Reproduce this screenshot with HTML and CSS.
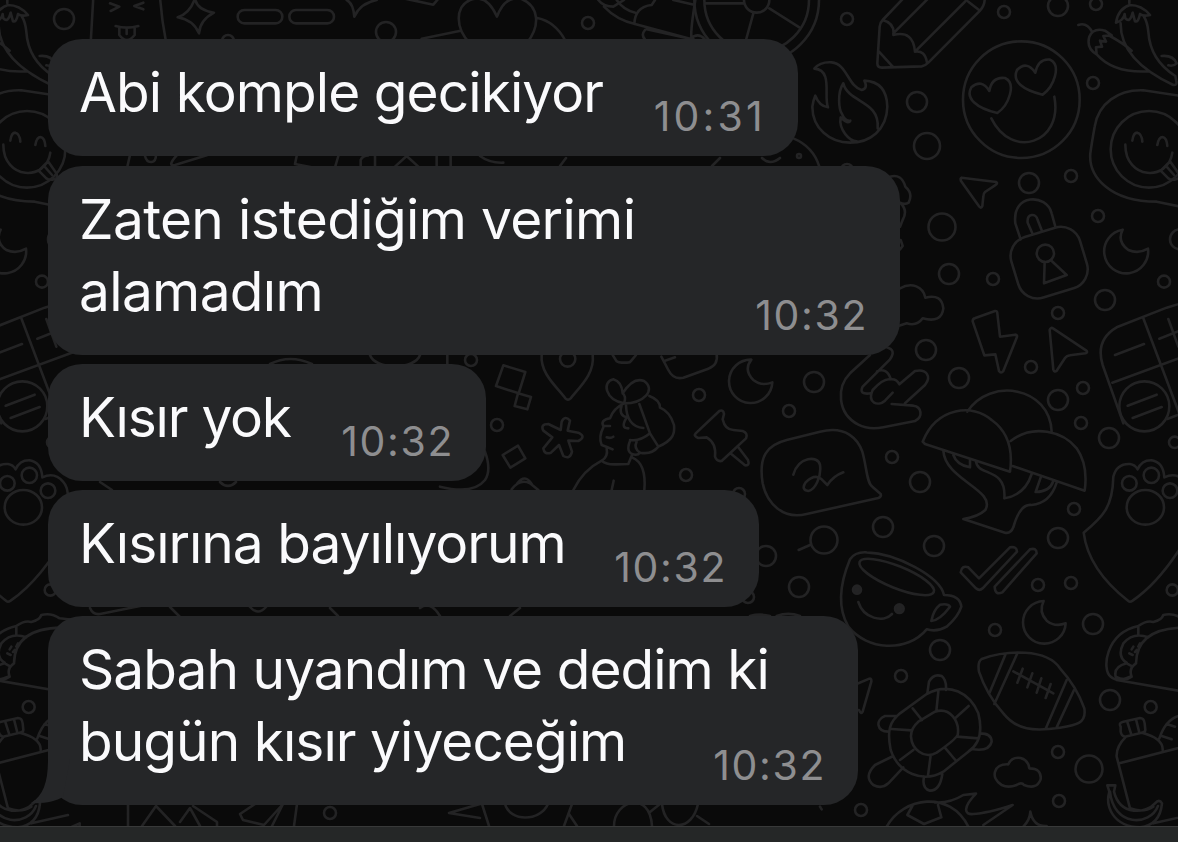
FILE: index.html
```html
<!DOCTYPE html>
<html lang="tr">
<head>
    <meta charset="UTF-8">
    <meta name="viewport" content="width=device-width, initial-scale=1.0">
    <title>Sohbet</title>
    <link rel="stylesheet" href="styles.css">
</head>
<body>
<div class="chat">
    <svg class="wallpaper" viewBox="0 0 1178 842" aria-hidden="true">
        <!-- doodles that repeat at both edges of the wallpaper -->
        <g id="edge">
            <g transform="translate(780 0) scale(.33333)">
                <!-- chilies -->
                <path d="M895 75Q920 66 936 95M928 110Q940 82 975 92L995 106L970 108L978 125L960 122L966 140L948 142L950 163Q918 145 928 110M990 108Q1030 130 1055 152M950 163Q1000 220 1106 214M1048 10V-10M1008 68Q1015 25 1050 15Q1085 15 1110 45Q1090 50 1080 42Q1075 68 1065 64L1058 38Q1050 70 1036 55L1034 42Q1030 62 1008 68M1022 70Q1020 180 1180 255Q1192 256 1189 243L1186 228Q1110 180 1105 95Q1102 65 1092 50M1145 168Q1180 165 1190 190Q1180 200 1165 196"/>
                <!-- sticker with tongue face -->
                <path d="M1300 640L1130 605C990 605 925 530 931 460Q935 430 944 380C955 310 1015 268 1090 271L1320 305"/>
                <circle cx="1107" cy="448" r="115"/>
                <path d="M1036 434C1036 540 1165 545 1177 458M1057 422Q1060 398 1072 398Q1085 400 1087 425M1132 435Q1136 411 1148 411Q1160 413 1162 438M1142 512L1170 484L1192 515Q1205 535 1188 538Q1175 542 1165 535ZM1160 500L1182 525"/>
            </g>
            <g transform="translate(880 160) scale(.33333)">
                <!-- moon -->
                <path d="M728 209A66 66 0 1 0 804 266Q775 283 745 270Q710 245 728 209Z"/>
                <circle cx="900" cy="238" r="30"/><circle cx="852" cy="365" r="18"/>
                <!-- calculator -->
                <path d="M730 790L668 615Q645 540 710 502L860 443Q920 425 1000 400M790 475L905 780M697 668L1060 535M705 585L792 552M865 477L895 560M838 536L910 508"/>
                <circle cx="793" cy="739" r="75"/>
                <path d="M743 737L830 704M758 774L845 741M862 777L1000 725"/>
            </g>
            <g transform="translate(740 340) scale(.33333)">
                <!-- paw -->
                <path d="M1166 784Q1045 690 1031 578C1090 530 1118 500 1120 410Q1130 370 1170 372Q1185 374 1193 388Q1205 360 1235 361Q1270 367 1273 412Q1310 395 1335 425Q1350 440 1350 475L1360 560Q1270 720 1178 782Q1170 787 1166 784Z"/>
                <ellipse cx="1216" cy="502" rx="56" ry="52"/><circle cx="1168" cy="430" r="22"/><circle cx="1234" cy="406" r="23"/><circle cx="1290" cy="452" r="22"/>
                <circle cx="1304" cy="307" r="17"/>
            </g>
            <g transform="translate(740 500) scale(.33333)">
                <circle cx="1297" cy="270" r="17"/>
                <!-- taco -->
                <path d="M1112 530C1085 510 1095 400 1195 378Q1220 360 1240 366Q1265 360 1270 345Q1300 338 1325 355L1370 360M1195 378V405M1188 490Q1190 385 1330 383M1188 490Q1165 505 1175 530Q1155 545 1127 530Q1120 500 1160 490L1178 500M1112 530Q1130 548 1170 530M1160 488Q1130 470 1150 430Q1180 395 1225 412M1180 440L1175 448M1200 430L1195 440M1190 450L1185 456M1168 460L1178 465M1130 540L1430 592"/>
            </g>
            <g transform="translate(820 630) scale(.33333)">
                <circle cx="992" cy="231" r="18"/>
                <!-- bottle -->
                <path d="M902 290Q895 278 910 275L960 264Q972 264 974 280L976 300Q975 308 965 308L915 320Q904 318 902 305ZM922 276L934 314M948 268L958 308M918 320Q888 350 890 380L930 535M966 308Q1030 325 1028 360M898 400L1110 345M1018 325Q1040 260 1090 255M1040 282L1065 290M1025 318L1055 328"/>
                <!-- banana -->
                <path d="M862 466H886L882 485C900 560 980 550 1005 520Q1018 505 1026 520Q1020 585 960 592C880 590 855 530 868 485ZM870 485C880 590 990 590 1014 528M930 535Q970 550 1000 530M1000 580L1110 555M1100 600L1145 580V600"/>
            </g>
        </g>
        <use href="#edge" x="-1122"/>

        <!-- small circles -->
        <g>
            <circle cx="847" cy="19" r="6"/><circle cx="1004" cy="12" r="6"/><circle cx="1058" cy="6" r="10"/><circle cx="1096" cy="4" r="6"/>
            <circle cx="917" cy="102" r="10"/><circle cx="927" cy="146" r="13"/><circle cx="1093" cy="83" r="6"/>
            <circle cx="1029" cy="183" r="10"/><circle cx="1071" cy="176" r="6"/><circle cx="1098" cy="216" r="6"/>
            <circle cx="942" cy="227" r="13.500"/><circle cx="949" cy="274" r="10"/><circle cx="993" cy="279" r="6"/>
            <circle cx="1105" cy="300" r="10"/><circle cx="1058" cy="313" r="6"/><circle cx="926" cy="350" r="10"/>
            <circle cx="959" cy="378" r="10"/><circle cx="1031" cy="367" r="6"/><circle cx="1083" cy="388" r="6"/>
            <circle cx="1058" cy="400" r="10"/><circle cx="1081" cy="423" r="6"/><circle cx="1109" cy="438" r="10"/>
            <circle cx="814" cy="382" r="10"/><circle cx="789" cy="411" r="6"/><circle cx="892" cy="457" r="6"/><circle cx="920" cy="482" r="10"/>
            <circle cx="1074" cy="509" r="6"/><circle cx="883" cy="527" r="10"/><circle cx="934" cy="546" r="10"/><circle cx="1058" cy="538" r="10"/>
            <circle cx="824" cy="540" r="13.500"/><circle cx="766" cy="556" r="10"/><circle cx="799" cy="587" r="10"/><circle cx="748" cy="597" r="6"/>
            <circle cx="1038" cy="585" r="6"/><circle cx="1071" cy="583" r="6"/><circle cx="995" cy="630" r="6"/><circle cx="1093" cy="624" r="10"/>
            <circle cx="940" cy="650" r="10"/><circle cx="901" cy="676" r="6"/><circle cx="1110" cy="700" r="10"/>
            <circle cx="1058" cy="752" r="6"/><circle cx="1089" cy="769" r="13.500"/><circle cx="1059" cy="801" r="6"/><circle cx="861" cy="810" r="6"/>
            <circle cx="471" cy="360" r="6"/><circle cx="497" cy="425" r="6"/><circle cx="699" cy="395" r="6"/><circle cx="686" cy="475" r="6"/><circle cx="739" cy="494" r="6"/>
            <circle cx="64" cy="19" r="10"/><circle cx="386" cy="32" r="10"/><circle cx="588" cy="23" r="6"/><circle cx="228" cy="41" r="6"/>
            <circle cx="330" cy="813" r="6"/><circle cx="799" cy="156" r="2"/><circle cx="847" cy="170" r="6"/>
        </g>

        <g transform="scale(.33333)">
            <path d="M280 -10L272 130M480 -10Q485 60 498 125M330 10L358 20L332 33M430 8L403 18L430 28M347 78Q380 88 415 78M358 82V105Q380 135 404 105V82M380 84V102"/>
            <path d="M585 -5Q590 30 642 38Q600 60 597 100Q580 60 533 52Q570 40 585 -5Z"/>
            <rect x="713" y="30" width="134" height="40" rx="20"/><rect x="868" y="30" width="134" height="40" rx="20"/>
            <path d="M1040 0Q1060 10 1063 50Q1080 10 1130 0M1210 -5L1300 14L1312 0M1265 116L1382 92"/>
            <path d="M1410 130C1365 85 1365 20 1410 0Q1460 -20 1491 50Q1515 -15 1565 -3C1620 20 1620 80 1580 130M1612 54Q1665 65 1695 120"/>
            <path d="M390 465L382 500M435 468Q440 488 455 486Q468 484 468 465M530 466Q500 500 525 495L620 466M890 468L885 492L935 502M1015 468L1005 502M1082 500V480Q1088 466 1105 466M1125 500V468M1185 500L1220 468L1255 500M1310 500V468M1352 500V468M1440 468Q1470 490 1510 488"/>
        </g>

        <g transform="translate(400 0) scale(.33333)">
            <path d="M595 0Q610 20 640 20L672 0M612 20Q650 60 705 72L870 116M650 0Q670 30 706 38M703 72Q705 20 755 15L765 0M820 0L882 14M886 0Q865 130 880 116M735 90Q722 105 735 118M740 88L870 116Q895 95 915 118"/>
            <circle cx="1070" cy="0" r="187"/><circle cx="1070" cy="0" r="157"/><circle cx="1070" cy="0" r="38"/>
            <path d="M915 10H1032M1108 25L1198 82M1060 40L1038 120"/>
        </g>

        <g transform="translate(780 0) scale(.33333)">
            <!-- pencil -->
            <path d="M370 -5L308 60Q300 68 299 80L292 190Q292 203 305 203L425 199Q435 198 445 188L600 32Q615 15 614 -5M308 60Q345 70 340 105Q400 90 405 155Q435 150 441 188M340 100L445 -5M405 155L560 0M565 5L600 32M297 155L338 200"/>
            <!-- flame -->
            <path d="M103 206Q120 185 155 187C200 190 205 260 245 270Q265 265 253 242Q320 245 322 320C320 390 270 428 210 428C150 428 97 385 97 320Q100 300 106 287Q118 318 144 322C130 290 160 210 103 206ZM190 250C170 280 178 330 185 340Q195 365 211 362Q205 375 182 352C175 390 210 424 230 424M190 250C205 310 300 300 293 385"/>
            <path d="M40 415Q100 440 118 500"/>
            <!-- heart eyes -->
            <circle cx="724" cy="299" r="175"/>
            <path d="M652 339C590 325 555 295 574 262Q605 235 628 273Q635 230 675 234C710 250 687 315 652 339ZM788 284C730 270 695 245 711 210Q740 180 766 218Q775 175 810 179C845 195 822 260 788 284ZM634 355C695 480 850 430 823 290"/>
        </g>

        <g transform="translate(880 160) scale(.33333)">
            <path d="M30 50Q65 40 76 80Q100 100 86 128Q75 135 60 128Q85 150 68 180L60 200M62 240L68 258L60 268M60 385C95 365 130 380 136 413Q185 400 190 445Q185 490 128 475Q110 500 80 490L55 498"/>
            <path d="M245 53L349 66Q355 70 345 76L315 96Q310 100 310 110L307 138Q303 147 297 139L243 63Q240 55 245 53Z"/>
            <!-- padlock -->
            <rect x="400" y="213" width="215" height="190" rx="60" transform="rotate(-17 507 308)"/>
            <path d="M422 238L406 190C395 100 500 100 515 160L526 200M457 220L443 188C440 160 468 158 473 180L486 213M494 306L492 370L560 345L512 300"/>
            <circle cx="496" cy="280" r="26"/>
            <!-- bolt and arrow -->
            <path d="M284 475L345 453Q352 452 352 460L360 530L405 524Q414 525 410 533L370 633Q363 642 357 633L346 583L313 586L278 484Q278 477 284 475ZM519 505L618 571Q625 577 617 580L570 586Q560 587 555 594L530 632Q523 638 520 629L509 510Q512 501 519 505Z"/>
        </g>

        <g transform="translate(440 340) scale(.33333)">
            <path d="M22 45V75M190 76L256 96L236 160L168 138ZM234 160L273 171L262 208L224 198ZM188 345L234 317L256 355L211 383ZM215 448Q240 415 270 430L295 450M232 430Q255 400 275 432M135 335Q155 390 135 420Q100 465 0 440"/>
            <!-- pin -->
            <path d="M305 45C300 100 350 140 376 175Q384 183 392 175C420 140 465 100 458 45M518 45L530 64Q535 68 545 68H562Q570 68 574 62L588 45M664 50L685 90Q700 120 730 113L805 86Q835 75 830 42M675 62L705 52"/><circle cx="383" cy="57" r="23"/>
            <path d="M362 270L365 245Q375 225 390 242L383 272L415 278Q440 290 415 303L385 302L396 335Q390 360 370 348L357 315L333 338Q312 345 310 325L337 292L310 272Q300 252 325 252Z"/>
            <!-- woman -->
            <path d="M552 190C495 180 485 125 520 118Q545 125 548 160Q580 110 612 123C650 150 610 190 552 190M548 160Q560 170 552 190M552 190Q520 205 510 235Q480 240 490 258L510 258M490 262Q475 290 485 315Q500 320 518 328M500 326Q505 350 485 362Q500 375 530 373L565 372L576 345M500 292Q512 296 520 290M545 196Q535 225 560 232Q540 265 565 265M558 195Q560 260 610 264M598 192L630 280Q600 305 570 300M570 303Q555 340 585 344Q595 345 600 338Q580 325 590 305M600 338Q635 345 655 320L630 280M655 320C700 300 705 280 702 255Q690 215 660 203Q660 180 628 168M485 362Q430 390 400 450M576 352Q620 370 613 450M521 422L515 450"/>
            <path d="M934 59A65 65 0 1 0 997 127Q965 140 940 120Q910 90 934 59Z"/>
            <!-- pushpin -->
            <path d="M767 280L838 213Q850 208 852 222L848 238Q855 270 880 270L908 273Q925 280 918 295L845 363Q830 365 825 350Q830 310 800 292L775 294Q760 288 767 280ZM875 343L915 376Q930 378 924 360L895 322"/>
        </g>

        <g transform="translate(740 340) scale(.33333)">
            <!-- hand -->
            <path d="M390 45L330 100C290 140 290 220 355 254Q385 270 430 262L525 243C550 230 545 200 520 197L455 192M440 22Q470 30 450 58L368 140Q355 165 392 160M411 94Q440 82 452 116M450 118Q430 115 398 150C380 190 415 200 435 182L458 158M450 118Q470 115 478 133L525 93C560 85 575 110 555 135L495 190"/>
            <!-- note bubble -->
            <path d="M140 300L240 275C320 255 355 300 367 335C380 380 380 430 397 440L422 462Q425 470 415 474L200 522C130 540 80 490 68 430C55 350 80 315 140 300ZM160 404C175 350 235 345 240 375C245 410 225 450 205 453Q182 450 197 427Q225 400 245 418L262 435Q280 408 310 397"/>
            <!-- mushrooms -->
            <path d="M548 305C590 200 700 190 755 240Q825 290 810 395L555 312ZM682 215C750 110 930 140 935 275M812 303C880 250 970 275 1010 325Q1045 375 1034 452L818 378M610 332C615 420 770 450 736 510Q715 530 670 537L795 578Q812 582 820 562Q840 490 875 495Q930 490 950 428M640 345Q650 375 690 382V357M708 363C710 410 800 380 793 475Q855 465 875 402M903 410L887 456Q930 455 940 423"/>
        </g>

        <g transform="translate(740 500) scale(.33333)">
            <path d="M176 150L210 135M30 348Q60 340 90 348M110 348Q145 335 180 348"/>
            <!-- cup -->
            <path d="M330 178Q345 155 380 157C470 160 600 230 612 285Q660 285 664 320Q655 350 620 380Q590 397 560 388C500 460 380 450 325 380C290 320 300 250 330 178ZM574 363Q580 330 600 314Q625 310 630 320Q600 360 574 363ZM355 306C370 355 430 370 456 342"/>
            <ellipse cx="470" cy="231" rx="120" ry="33" transform="rotate(22 470 231)"/>
            <circle class="dot" cx="351" cy="269" r="12"/><circle class="dot" cx="478" cy="326" r="13"/>
            <!-- checks -->
            <path d="M662 217Q665 195 685 202L717 235L810 142Q830 138 831 155L728 265Q718 274 708 265ZM764 260L870 148Q890 142 890 160L787 277Q765 287 764 260Z"/>
            <path d="M911 303A64 64 0 1 0 977 370Q945 382 920 362Q895 335 911 303Z"/>
        </g>

        <g transform="translate(820 630) scale(.33333)">
            <path d="M110 162L148 146Q155 145 154 155L128 245Q123 254 117 240M0 530L5 538"/>
            <!-- football -->
            <path d="M485 87C560 60 680 55 720 115Q770 170 793 235C800 280 770 285 720 293C640 305 590 300 550 250Q500 195 477 125Q472 95 485 87ZM556 74L508 190M592 70L523 222M740 150L678 294M762 180L710 292M580 124L700 190M608 116L592 158M637 130L622 172M664 145L650 188M692 162L677 204"/>
            <!-- turtle -->
            <path d="M240 250L320 192C390 155 450 190 475 250C490 310 475 345 445 365L370 425C310 460 235 430 212 360C200 300 210 275 240 250ZM295 275L345 245C390 230 420 275 413 315Q405 330 350 368C310 390 275 355 273 320Q272 295 295 275ZM355 185L349 243M278 235L306 270M446 228L407 263M215 297L275 301M411 320L475 325M374 352L406 390M332 376L324 437M240 390L280 360M322 190L327 155Q340 130 365 138Q380 150 378 180M230 258L195 258C165 270 170 305 205 305M480 310Q515 310 515 335Q508 365 460 358M220 378L165 405Q130 440 160 465Q185 478 205 460L250 412M312 440Q305 475 330 482Q360 482 367 432"/>
            <path d="M545 465C510 445 520 400 565 403Q575 380 602 384Q625 390 628 415Q665 415 662 448Q650 480 612 465Q605 455 590 465Q565 475 545 465Z"/>
            <!-- burning ball -->
            <path d="M200 590C250 500 390 480 445 590M277 528L262 555L312 582L364 562L354 525M345 517Q390 520 430 495L468 491C430 530 430 555 460 552Q500 550 578 525L490 585M610 590Q630 570 631 545Q640 590 680 588"/>
        </g>

        <!-- pieces between and below the bubbles -->
        <path d="M90 608Q93 615 100 614L140 606M142 826L156 806L175 826M180 822L190 808L200 826M193 806L217 822V828M255 804L240 814L243 820L264 825L283 804M272 826L283 804M297 804L294 826M128 804V826M480 804L449 813L480 818M482 804L489 826M505 804C510 822 540 822 548 804M572 804L564 826M569 814L577 826M614 826C614 800 650 790 652 826M650 812L660 804M662 804C665 832 692 832 698 804M697 816L709 824M370 355C375 370 415 370 420 355M270 364Q290 354 312 364M170 607L180 617M250 607Q258 616 266 607M330 608L338 616M420 608Q430 600 440 616M520 608L510 616M100 482L112 490M220 482Q228 490 236 482M566 158L560 166M762 158Q770 166 780 158M720 158L712 166"/>
    </svg>

    <main class="messages">
        <div class="bubble bubble-1">
            <p class="text">Abi komple gecikiyor</p>
            <time class="time">10:31</time>
        </div>
        <div class="bubble bubble-2">
            <p class="text">Zaten istediğim verimi<br>alamadım</p>
            <time class="time">10:32</time>
        </div>
        <div class="bubble bubble-3">
            <p class="text">Kısır yok</p>
            <time class="time">10:32</time>
        </div>
        <div class="bubble bubble-4">
            <p class="text">Kısırına bayılıyorum</p>
            <time class="time">10:32</time>
        </div>
        <div class="bubble bubble-5">
            <p class="text">Sabah uyandım ve dedim ki<br>bugün kısır yiyeceğim</p>
            <time class="time">10:32</time>
            <svg class="tail" viewBox="0 0 40 46" aria-hidden="true"><path d="M18 0C18 22 14 36 1 44C14 45 26 42 33 38L40 0Z"/></svg>
        </div>
    </main>
    <footer class="input-bar"></footer>
</div>
</body>
</html>
```

FILE: styles.css
```css
* { box-sizing: border-box; }
body { margin: 0; background-color: #0a0a0a; font-family: Inter, "Liberation Sans", sans-serif; }
.chat { position: relative; display: flex; flex-direction: column; height: 842px; overflow: hidden; }

/* Wallpaper */
.wallpaper { position: absolute; top: 0; left: 0; width: 1178px; height: 842px; fill: none; stroke: #232324; stroke-width: 2.6px; stroke-linecap: round; stroke-linejoin: round; }
.wallpaper path, .wallpaper circle, .wallpaper rect, .wallpaper ellipse { vector-effect: non-scaling-stroke; }
.wallpaper .dot { fill: #232324; }

/* Messages */
.messages { position: relative; flex: 1; display: flex; flex-direction: column; align-items: flex-start; gap: 9px; padding: 39px 0 0 48px; }
.bubble { position: relative; display: flex; justify-content: space-between; align-items: flex-end; padding: 17px 32px 20px 31px; border-radius: 34px; background-color: #252628; }
.bubble-1 { width: 750px; margin-bottom: 1px; letter-spacing: -0.93px; }
.bubble-2 { width: 852px; letter-spacing: -0.66px; }
.bubble-3 { width: 438px; letter-spacing: -1.2px; }
.bubble-4 { width: 711px; letter-spacing: -1px; }
.bubble-5 { width: 810px; letter-spacing: -0.95px; }
/* the time may sit under the end of a long first line */
.text { min-width: 0; margin: 0 0 8px; color: #fafafc; font-size: 55px; line-height: 72px; white-space: nowrap; }
.time { flex: none; color: #8e8e90; font-size: 41px; line-height: 40px; letter-spacing: 1.6px; white-space: nowrap; }
.bubble-1 .time { letter-spacing: 3.2px; }
.tail { position: absolute; left: -18px; bottom: 0; width: 40px; height: 46px; fill: #252628; }

/* Bottom bar */
.input-bar { position: relative; height: 16px; background-color: #252727; border-top: 1px solid #383939; }
```
